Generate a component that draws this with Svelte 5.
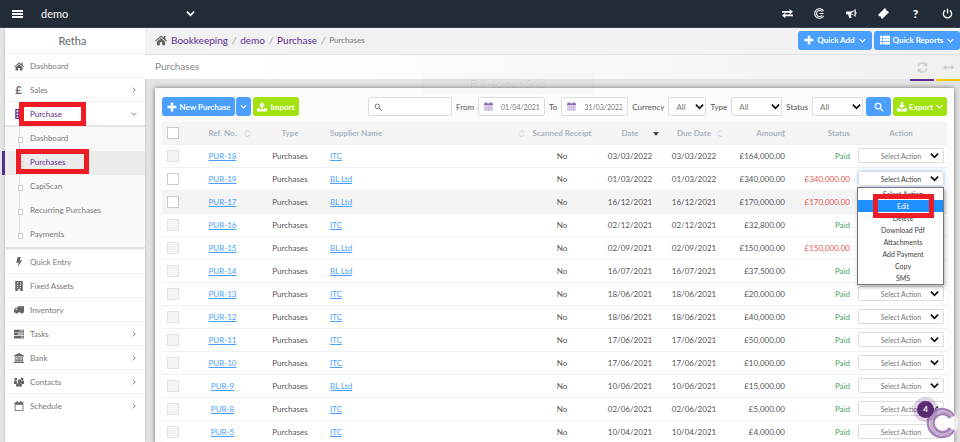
<script>
    const icons = {
        home: 'M8 2L0 9l1 1 7-6 7 6 1-1-2-2V2.500h-2V5zM8 5.300L2.500 10v5H6.500v-4h3v4h4v-5z',
        plus: 'M6 1h4v5h5v4h-5v5H6v-5H1V6h5z',
        upload: 'M8 0l5 5.500h-3V10H6V5.500H3zM0 10h4.500v1.500h7V10H16v5H0z',
        download: 'M6 0h4v5h3l-5 5.500L3 5h3zM0 10h4l3 2h2l3-2h4v5H0z',
        list: 'M0 1h4v4H0zM5 1h11v4H5zM0 6h4v4H0zM5 6h11v4H5zM0 11h4v4H0zM5 11h11v4H5z',
        bolt: 'M6 0h5L9 5h4L6 16l1.500-7H3.500z',
        building: 'M2 0h12v16h-4v-3H6v3H2zM5 2v2h1.500V2zm4.500 0v2H11V2zM5 6v2h1.500V6zm4.500 0v2H11V6zM5 9.500v2h1.500v-2zm4.500 0v2H11v-2z',
        truck: 'M6 2h10v10h-1a2.300 2.300 0 0 1-4.500 0H6.500a2.300 2.300 0 0 1-4.500 0H0V7l3-3h3zM2 7.500h3V5.500H3.500z',
        tasks: 'M0 1h16v4H0zM9 2.300v1.400h6V2.300zM0 6h16v4H0zM6 7.300v1.400h9V7.300zM0 11h16v4H0zM11 12.300v1.400h4v-1.400z',
        bank: 'M8 0l8 4v1.500H0V4zM2 6.500h2V12h1.500V6.500h2V12h1V6.500h2V12H12V6.500h2V12h1v1.500H1V12h1zM0 14.300h16V16H0z',
        users: 'M8 4a3 3 0 1 1 0 5.800A3 3 0 0 1 8 4zM3 1a2.300 2.300 0 1 1 0 4.600A2.300 2.300 0 0 1 3 1zm10 0a2.300 2.300 0 1 1 0 4.600A2.300 2.300 0 0 1 13 1zM0 6h4l1 4-2 1H0zm16 0h-4l-1 4 2 1h3zM3 15c0-3 1-5 2.500-5h5c1.500 0 2.500 2 2.500 5z',
        calendar: 'M1 2h3V0h2v2h4V0h2v2h3v14H1zM2.300 6v8.700h11.400V6z',
        grid: 'M2 0h12v16H2zM4 2v3h3V2zm5 0v3h3V2zM4 7v3h3V7zm5 0v3h3V7zM4 12v2h3v-2zm5 0v2h3v-2z',
        exchange: 'M0 4.500h11V1.500l5 4-5 4V7H0zM16 9.500v2.500H5v3l-5-4 5-4v2.500z',
        horn: 'M0 5h6c4 0 6-2 8-4v4.500c2 .5 2 3 0 3.500V13c-2-2-4-3.500-7-4l1 5-3 1-2-6H0zM8 6.500v2c2 .5 3.500 1.500 4.500 2.500V3.500C11.500 4.800 10 6 8 6.500z',
        ticket: 'M10 0l2 2c-.500 1.500.500 2.500 2 2l2 2L6 16l-2-2c.500-1.500-.500-2.500-2-2l-2-2z',
        arrows: 'M0 8l4-4v3h8V4l4 4-4 4V9H4v3z'
    };

    const menu = [
        { label: 'Dashboard', icon: 'home' },
        { label: 'Sales', icon: 'pound', more: true },
        {
            label: 'Purchase', icon: 'grid', more: true, open: true,
            children: ['Dashboard', 'Purchases', 'CapiScan', 'Recurring Purchases', 'Payments']
        },
        { label: 'Quick Entry', icon: 'bolt' },
        { label: 'Fixed Assets', icon: 'building' },
        { label: 'Inventory', icon: 'truck' },
        { label: 'Tasks', icon: 'tasks', more: true },
        { label: 'Bank', icon: 'bank', more: true },
        { label: 'Contacts', icon: 'users', more: true },
        { label: 'Schedule', icon: 'calendar', more: true }
    ];

    const rows = [
        { ref: 'PUR-18', supplier: 'ITC', date: '03/03/2022', amount: '£164,000.00' },
        { ref: 'PUR-19', supplier: 'BL Ltd', date: '01/03/2022', amount: '£340,000.00', due: true },
        { ref: 'PUR-17', supplier: 'BL Ltd', date: '16/12/2021', amount: '£170,000.00', due: true, hover: true },
        { ref: 'PUR-16', supplier: 'ITC', date: '02/12/2021', amount: '£32,800.00' },
        { ref: 'PUR-15', supplier: 'BL Ltd', date: '02/09/2021', amount: '£150,000.00', due: true, locked: true },
        { ref: 'PUR-14', supplier: 'BL Ltd', date: '16/07/2021', amount: '£37,500.00' },
        { ref: 'PUR-13', supplier: 'ITC', date: '18/06/2021', amount: '£20,000.00' },
        { ref: 'PUR-12', supplier: 'ITC', date: '18/06/2021', amount: '£40,000.00' },
        { ref: 'PUR-11', supplier: 'ITC', date: '17/06/2021', amount: '£50,000.00' },
        { ref: 'PUR-10', supplier: 'ITC', date: '17/06/2021', amount: '£10,000.00' },
        { ref: 'PUR-9', supplier: 'BL Ltd', date: '10/06/2021', amount: '£15,000.00' },
        { ref: 'PUR-8', supplier: 'ITC', date: '02/06/2021', amount: '£5,000.00' },
        { ref: 'PUR-5', supplier: 'ITC', date: '10/04/2021', amount: '£4,000.00' }
    ];

    const actions = ['Select Action', 'Edit', 'Delete', 'Download Pdf', 'Attachments', 'Add Payment', 'Copy', 'SMS'];
    let openRow = $state('PUR-19');

    function choose() {
        openRow = null;
    }
</script>

{#snippet icon(name)}
    <svg class="icon" viewBox="0 0 16 16" aria-hidden="true"><path fill-rule="evenodd" d={icons[name]} /></svg>
{/snippet}

{#snippet chevron()}
    <svg class="chevron" viewBox="0 0 10 10" aria-hidden="true"><path d="M1 3l4 4 4-4" /></svg>
{/snippet}

{#snippet magnifier()}
    <svg class="icon line" viewBox="0 0 16 16" aria-hidden="true"><circle cx="6.500" cy="6.500" r="4.500" /><path d="M10 10l5 5" /></svg>
{/snippet}

{#snippet sorter()}
    <svg class="sorter" viewBox="0 0 8 10" aria-hidden="true"><path d="M1 4l3-3 3 3M1 6l3 3 3-3" /></svg>
{/snippet}

<div class="app">
    <header class="topbar">
        <button class="top-btn burger" aria-label="Toggle menu"><i></i><i></i><i></i></button>
        <button class="company">demo {@render chevron()}</button>
        <nav class="top-icons">
            <button class="top-btn" aria-label="Switch">{@render icon('exchange')}</button>
            <button class="top-btn" aria-label="Capium">
                <svg class="icon thin" viewBox="0 0 16 16"><path d="M14 4.500A7 7 0 1 0 14 11.500M12 5.500A4.500 4.500 0 1 0 12 10.500M8 8h6" /></svg>
            </button>
            <button class="top-btn" aria-label="News">{@render icon('horn')}</button>
            <button class="top-btn" aria-label="Tickets">{@render icon('ticket')}</button>
            <button class="top-btn help">?</button>
            <button class="top-btn" aria-label="Log out">
                <svg class="icon line" viewBox="0 0 16 16"><path d="M4.500 3.500a6 6 0 1 0 7 0M8 1v7" /></svg>
            </button>
        </nav>
    </header>

    <div class="body">
        <aside class="sidebar">
            <div class="user">Retha</div>
            {#each menu as item}
                <a class="item" class:open={item.open} href="#menu">
                    <span class="item-icon">
                        {#if item.icon === 'pound'}<b>£</b>{:else}{@render icon(item.icon)}{/if}
                    </span>
                    <span>{item.label}</span>
                    {#if item.more}{@render chevron()}{/if}
                </a>
                {#if item.children}
                    <div class="submenu">
                        {#each item.children as child}
                            <a class="subitem" class:active={child === 'Purchases'} href="#menu">{child}</a>
                        {/each}
                    </div>
                {/if}
            {/each}
        </aside>

        <main class="main">
            <div class="crumb-bar">
                <nav class="crumbs">
                    {@render icon('home')}
                    <a href="#bookkeeping">Bookkeeping</a><i>/</i>
                    <a href="#demo">demo</a><i>/</i>
                    <a href="#purchase">Purchase</a><i>/</i>
                    <span>Purchases</span>
                </nav>
                <button class="btn quick-add">{@render icon('plus')} Quick Add {@render chevron()}</button>
                <button class="btn quick-reports">{@render icon('list')} Quick Reports {@render chevron()}</button>
            </div>

            <div class="title-bar">
                <h1>Purchases</h1>
                <button class="tool" aria-label="Refresh">
                    <svg class="icon line" viewBox="0 0 16 16"><path d="M2 7a6 6 0 0 1 11-3M14 1v4h-4M14 9a6 6 0 0 1-11 3M2 15v-4h4" /></svg>
                </button>
                <button class="tool yellow" aria-label="Expand">{@render icon('arrows')}</button>
            </div>
            <div class="snip">Full-screen Snip</div>

            <section class="card">
                <div class="filters">
                    <div class="group">
                        <button class="btn main-btn">{@render icon('plus')} New Purchase</button>
                        <button class="btn caret" aria-label="More">{@render chevron()}</button>
                    </div>
                    <button class="btn green">{@render icon('upload')} Import</button>
                    <div class="field search">{@render magnifier()}<input type="text" aria-label="Search" /></div>
                    <label for="from">From</label>
                    <div class="field date">
                        <svg class="cal" viewBox="0 0 16 16"><path d="M0 2h16v4H0zM3 0h2v3H3zM11 0h2v3h-2z" /><path class="pale" d="M0 6h16v10H0z" /><path class="rule" d="M0 9.500h16M0 13h16M4 6v10M8 6v10M12 6v10" /></svg>
                        <input id="from" type="text" value="01/04/2021" />
                    </div>
                    <label for="to">To</label>
                    <div class="field date">
                        <svg class="cal" viewBox="0 0 16 16"><path d="M0 2h16v4H0zM3 0h2v3H3zM11 0h2v3h-2z" /><path class="pale" d="M0 6h16v10H0z" /><path class="rule" d="M0 9.500h16M0 13h16M4 6v10M8 6v10M12 6v10" /></svg>
                        <input id="to" type="text" value="31/03/2022" />
                    </div>
                    <label for="currency">Currency</label>
                    <div class="pick narrow"><select id="currency"><option>All</option></select>{@render chevron()}</div>
                    <label for="type">Type</label>
                    <div class="pick"><select id="type"><option>All</option></select>{@render chevron()}</div>
                    <label for="status">Status</label>
                    <div class="pick"><select id="status"><option>All</option></select>{@render chevron()}</div>
                    <button class="btn find" aria-label="Search">{@render magnifier()}</button>
                    <button class="btn green export">{@render icon('download')}Export {@render chevron()}</button>
                </div>

                <table>
                    <colgroup>
                        <col class="c-check" /><col class="c-ref" /><col class="c-type" /><col />
                        <col class="c-scan" /><col class="c-date" /><col class="c-due" />
                        <col class="c-amount" /><col class="c-status" /><col class="c-action" />
                    </colgroup>
                    <thead>
                        <tr>
                            <th class="check"><input type="checkbox" aria-label="Select all" /></th>
                            <th>Ref. No. {@render sorter()}</th>
                            <th>Type</th>
                            <th class="left">Supplier Name {@render sorter()}</th>
                            <th>Scanned Receipt</th>
                            <th>Date <span class="sorted"></span></th>
                            <th class="tight">Due Date {@render sorter()}</th>
                            <th class="right tight">Amount {@render sorter()}</th>
                            <th class="right">Status</th>
                            <th class="action">Action</th>
                        </tr>
                    </thead>
                    <tbody>
                        {#each rows as row}
                            <tr class:hover={row.hover}>
                                <td class="check"><input type="checkbox" aria-label="Select {row.ref}" disabled={!row.due || row.locked} /></td>
                                <td><a href="#ref">{row.ref}</a></td>
                                <td>Purchases</td>
                                <td class="left"><a href="#supplier">{row.supplier}</a></td>
                                <td>No</td>
                                <td>{row.date}</td>
                                <td>{row.date}</td>
                                <td class="right">{row.amount}</td>
                                <td class="right {row.due ? 'due' : 'paid'}">{row.due ? row.amount : 'Paid'}</td>
                                <td class="action">
                                    <div class="pick act" class:focus={openRow === row.ref}>
                                        <select aria-label="Action for {row.ref}"><option>Select Action</option></select>
                                        {@render chevron()}
                                    </div>
                                    {#if openRow === row.ref}
                                        <div class="options">
                                            {#each actions as action}
                                                <button class:picked={action === 'Edit'} onclick={choose}>{action}</button>
                                            {/each}
                                        </div>
                                    {/if}
                                </td>
                            </tr>
                        {/each}
                    </tbody>
                </table>
            </section>
        </main>
    </div>

    <button class="chat" aria-label="Open chat">
        <svg viewBox="0 0 32 32">
            <circle class="disc" cx="16" cy="16" r="16" />
            <path class="ring" d="M28 9A14 14 0 1 0 28 23" />
            <path class="ring mid" d="M26 10A11.500 11.500 0 1 0 26 22" />
            <path class="ring" d="M24 11A9 9 0 1 0 24 21" />
        </svg>
        <span class="badge">4</span>
    </button>
</div>

<style>
:global(body) {
    margin: 0;
}
.app {
    --blue: #4a9fff;
    --green: #a2e20e;
    --purple: #5c2d91;
    --red: #ee1c25;
    position: relative;
    display: flex;
    flex-direction: column;
    height: 100vh;
    overflow: hidden;
    background: #e4e4e4;
    font-family: Lato, "Open Sans", sans-serif;
    font-size: 8px;
    line-height: 12px;
    color: #555;
}
.app * {
    box-sizing: border-box;
}
button, input, select {
    font: inherit;
    color: inherit;
    margin: 0;
    padding: 0;
    border: 0;
    background: none;
}
.icon {
    width: 10px;
    height: 10px;
    fill: currentColor;
    flex: none;
}
.icon.line {
    fill: none;
    stroke: currentColor;
    stroke-width: 2;
}
.icon.thin {
    fill: none;
    stroke: currentColor;
    stroke-width: 1.500;
}
.chevron {
    width: 7px;
    height: 7px;
    fill: none;
    stroke: currentColor;
    stroke-width: 1.500;
    flex: none;
}
.topbar {
    display: flex;
    align-items: center;
    flex: none;
    height: 28px;
    padding: 0 7px 0 12px;
    background: #222b38;
    border-bottom: 1px solid #3c4350;
    color: #fff;
}
.top-btn {
    display: flex;
    align-items: center;
    justify-content: center;
}
.burger {
    flex-direction: column;
    gap: 1px;
    width: 11px;
}
.burger i {
    width: 11px;
    height: 2px;
    background: #fff;
}
.company {
    display: flex;
    align-items: center;
    justify-content: space-between;
    width: 154px;
    margin-left: 18px;
    font-size: 11px;
}
.company .chevron {
    width: 9px;
    height: 9px;
    stroke-width: 2;
}
.top-icons {
    display: flex;
    gap: 21px;
    margin-left: auto;
}
.top-icons .icon {
    width: 11px;
    height: 11px;
}
.top-icons .help {
    width: 11px;
    font-size: 12px;
    font-weight: 900;
}
.body {
    display: flex;
    flex: 1;
    min-height: 0;
}
.sidebar {
    flex: none;
    width: 140px;
    margin-left: 5px;
    background: #fff;
    box-shadow: 0 0 3px rgba(0, 0, 0, 0.2);
}
.user {
    height: 25px;
    line-height: 25px;
    padding-right: 5px;
    text-align: center;
    font-size: 11px;
    color: #666;
}
.item {
    position: relative;
    display: flex;
    align-items: center;
    height: 24px;
    padding: 0 8px 0 8px;
    border-top: 1px solid #f2f2f2;
    color: #777;
    text-decoration: none;
}
.item-icon {
    display: flex;
    justify-content: center;
    width: 11px;
    margin-right: 6px;
    color: #666;
}
.item-icon b {
    font-size: 11px;
}
.item .chevron {
    width: 6px;
    height: 6px;
    margin-left: auto;
    transform: rotate(-90deg);
}
.item.open {
    color: var(--purple);
}
.item.open .item-icon {
    color: var(--purple);
}
.item.open .chevron {
    transform: none;
    color: #777;
}
.item.open::after,
.subitem.active::after,
.picked::after {
    content: "";
    position: absolute;
    z-index: 5;
    border: 5px solid var(--red);
}
.item.open::after {
    inset: 0 59px -1px 14px;
}
.submenu {
    position: relative;
    background: #fafafa;
    border-top: 2px solid #e4e4e4;
    border-bottom: 2px solid #e4e4e4;
}
.submenu::before {
    content: "";
    position: absolute;
    z-index: 1;
    left: 14px;
    top: 0;
    bottom: 12px;
    width: 1px;
    background: #ddd;
}
.subitem {
    position: relative;
    display: flex;
    align-items: center;
    height: 24px;
    padding: 0 0 2px 25px;
    color: #777;
    text-decoration: none;
}
.subitem::before {
    content: "";
    position: absolute;
    z-index: 2;
    left: 13px;
    top: 10px;
    width: 3px;
    height: 4px;
    border: 1px solid #ccc;
    background: #fff;
}
.subitem.active {
    color: var(--purple);
    background: #ececec;
    box-shadow: -3px 0 0 var(--purple);
}
.subitem.active::after {
    inset: -2px 56px 1px 11px;
}
.main {
    position: relative;
    display: flex;
    flex-direction: column;
    flex: 1;
    min-width: 0;
}
.crumb-bar {
    display: flex;
    align-items: center;
    flex: none;
    gap: 2px;
    height: 27px;
    padding: 0 0 2px 10px;
    background: #f2f2f2;
    border-bottom: 1px solid #e0e0e0;
}
.crumbs {
    display: flex;
    align-items: center;
    gap: 4px;
    flex: 1;
    font-size: 10px;
}
.crumbs .icon {
    width: 12px;
    height: 12px;
    color: #666;
}
.crumbs a {
    color: var(--purple);
    text-decoration: none;
}
.crumbs i {
    color: #999;
}
.crumbs span {
    font-size: 8px;
    color: #777;
}
.btn {
    display: flex;
    align-items: center;
    justify-content: center;
    gap: 3px;
    height: 19px;
    padding: 0;
    border-radius: 3px;
    background: var(--blue);
    color: #fff;
    font-weight: 700;
    white-space: nowrap;
}
.btn .chevron {
    margin-left: 1px;
}
.quick-add {
    width: 74px;
}
.quick-reports {
    width: 86px;
}
.title-bar {
    display: flex;
    align-items: center;
    flex: none;
    gap: 2px;
    height: 24px;
    padding: 0 0 2px 10px;
    background: linear-gradient(90deg, #fff, #fcfcfc 40%, #f0f0f0);
}
h1 {
    flex: 1;
    margin: 0;
    font-size: 10px;
    font-weight: 400;
    color: #888;
}
.tool {
    display: flex;
    align-items: center;
    justify-content: center;
    width: 24px;
    height: 26px;
    border-bottom: 2px solid var(--purple);
    margin-top: 4px;
    color: #ccc;
}
.tool.yellow {
    border-color: #ffc800;
}
.tool .icon {
    width: 11px;
    height: 11px;
}
.snip {
    position: absolute;
    z-index: 4;
    left: 34%;
    top: 45px;
    width: 172px;
    height: 21px;
    line-height: 22px;
    background: rgba(160, 190, 210, 0.06);
    text-align: center;
    font-size: 11px;
    color: rgba(0, 0, 0, 0.07);
    pointer-events: none;
}
.card {
    flex: 1;
    margin: 9px 6px 0 10px;
    padding: 9px 7px 0 7px;
    background: #fcfcfc;
    box-shadow: 0 0 5px rgba(0, 0, 0, 0.5);
}
.filters {
    display: flex;
    align-items: center;
    gap: 4px;
    height: 19px;
    margin-bottom: 6px;
}
.group {
    display: flex;
    gap: 1px;
}
.main-btn {
    width: 73px;
}
.caret {
    width: 15px;
}
.caret .chevron {
    margin: 0;
}
.green {
    width: 46px;
    margin-left: -2px;
    background: var(--green);
}
.field {
    display: flex;
    align-items: center;
    height: 19px;
    padding: 0 5px;
    border: 1px solid #ddd;
    border-radius: 2px;
    background: #fff;
    color: #777;
}
.field input {
    width: 100%;
    min-width: 0;
    outline: none;
}
.search {
    width: 84px;
    margin-left: auto;
}
.search .icon {
    width: 8px;
    height: 8px;
}
.date {
    width: 67px;
}
.date input {
    padding-left: 8px;
    font-size: 7px;
    text-align: center;
}
.cal {
    width: 9px;
    height: 9px;
    flex: none;
    fill: #8a6bb0;
}
.cal .pale {
    fill: #e9e0f2;
}
.cal .rule {
    stroke: #b9a3d2;
}
.pick {
    position: relative;
    display: flex;
    align-items: center;
    width: 51px;
    height: 19px;
}
.pick.narrow {
    width: 38px;
}
.pick select {
    appearance: none;
    width: 100%;
    height: 100%;
    padding-left: 7px;
    border: 1px solid #ddd;
    border-radius: 2px;
    background: #fff;
    color: #777;
    outline: none;
}
.pick .chevron {
    position: absolute;
    right: 2px;
    width: 9px;
    height: 9px;
    stroke: #111;
    stroke-width: 2;
    pointer-events: none;
}
.find {
    width: 25px;
    margin-left: -1px;
}
.export {
    width: 54px;
    gap: 2px;
}
table {
    width: 100%;
    table-layout: fixed;
    border-collapse: collapse;
    background: #fff;
}
.c-check { width: 27px; }
.c-ref { width: 67px; }
.c-type { width: 68px; }
.c-scan { width: 64px; }
.c-date { width: 72px; }
.c-due { width: 56px; }
.c-amount { width: 63px; }
.c-status { width: 65px; }
.c-action { width: 97px; }
th, td {
    position: relative;
    height: 23px;
    padding: 0;
    border-bottom: 1px solid #eef2f5;
    text-align: center;
    font-weight: 400;
    white-space: nowrap;
}
th {
    height: 22px;
    background: #f5f5f5;
    color: #a9b3bd;
    font-weight: 700;
}
.left {
    padding-left: 6px;
    text-align: left;
}
.right {
    text-align: right;
}
td a {
    color: var(--blue);
}
.paid {
    color: #4da458;
}
.due {
    color: #e05555;
}
.hover {
    background: #f4f4f4;
}
.check {
    padding-left: 5px;
    text-align: left;
}
.check input {
    appearance: none;
    display: block;
    width: 12px;
    height: 12px;
    border: 1px solid #ccc;
    background: #fff;
}
.check input:disabled {
    border-color: #e2e2e2;
    background: #f4f4f4;
}
.sorter {
    position: absolute;
    right: 5px;
    top: 7px;
    width: 7px;
    height: 9px;
    fill: none;
    stroke: #c4c8ce;
}
.tight .sorter {
    right: -2px;
}
.sorted {
    position: absolute;
    right: 7px;
    top: 10px;
    border: 3px solid transparent;
    border-top: 4px solid #444;
    border-bottom: 0;
}
.action {
    padding: 0 3px 0 8px;
}
.act {
    width: 100%;
    height: 15px;
}
.act select {
    padding: 0;
    font-size: 7px;
    text-align: center;
    text-align-last: center;
}
.act .chevron {
    right: 5px;
}
.act.focus {
    box-shadow: 0 0 4px rgba(74, 159, 255, 0.6);
}
.act.focus select {
    color: #444;
}
.options {
    position: absolute;
    z-index: 3;
    left: 7px;
    right: 3px;
    top: 19px;
    display: flex;
    flex-direction: column;
    border: 1px solid #777;
    background: #fff;
    box-shadow: 1px 2px 4px rgba(0, 0, 0, 0.3);
}
.options button {
    position: relative;
    height: 12px;
    line-height: 12px;
    padding-left: 5px;
    font-size: 7px;
    color: #444;
}
.options .picked {
    background: #1e90ff;
    color: #fff;
}
.picked::after {
    inset: -6px 9px -6px 15px;
}
.chat {
    position: absolute;
    z-index: 6;
    right: 2px;
    bottom: 3px;
    width: 32px;
    height: 32px;
}
.chat svg {
    display: block;
    width: 32px;
    height: 32px;
    fill: none;
}
.disc {
    fill: rgba(255, 255, 255, 0.7);
}
.ring {
    stroke: #a583b8;
    stroke-width: 2.500;
}
.ring.mid {
    stroke: #c4aed0;
}
.badge {
    position: absolute;
    left: -9px;
    top: -6px;
    width: 17px;
    height: 17px;
    border-radius: 50%;
    background: #5b2a73;
    box-shadow: 0 0 0 4px rgba(91, 42, 115, 0.2);
    color: #fff;
    font-weight: 700;
    line-height: 17px;
    text-align: center;
}
</style>
